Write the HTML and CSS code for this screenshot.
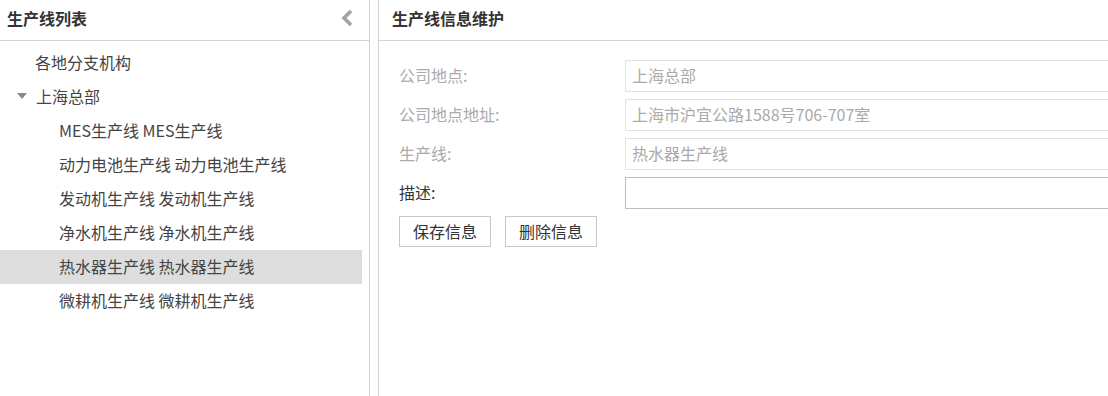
FILE: index.html
```html
<!DOCTYPE html>
<html lang="zh-CN">
<head>
    <meta charset="UTF-8">
    <title>生产线信息维护</title>
    <link rel="stylesheet" href="styles.css">
</head>
<body>

    <div class="layout">
        <div class="side-panel">
            <div class="panel-head">
                <span class="panel-title">生产线列表</span>
                <span class="collapse-btn">
                    <svg width="12" height="18" viewBox="0 0 12 18">
                        <polyline points="10,2 3,9 10,16" fill="none" stroke="#a3a3a3" stroke-width="3.6" stroke-linejoin="miter"/>
                    </svg>
                </span>
            </div>
            <ul class="tree">
                <li class="tree-node root">各地分支机构</li>
                <li class="tree-node branch"><span class="caret"></span>上海总部</li>
                <li class="tree-node leaf">MES生产线 MES生产线</li>
                <li class="tree-node leaf">动力电池生产线 动力电池生产线</li>
                <li class="tree-node leaf">发动机生产线 发动机生产线</li>
                <li class="tree-node leaf">净水机生产线 净水机生产线</li>
                <li class="tree-node leaf selected">热水器生产线 热水器生产线</li>
                <li class="tree-node leaf">微耕机生产线 微耕机生产线</li>
            </ul>
        </div>

        <div class="main-panel">
            <div class="panel-head">
                <span class="panel-title">生产线信息维护</span>
            </div>
            <form class="info-form">
                <div class="form-row">
                    <label class="muted">公司地点:</label>
                    <input type="text" value="上海总部" disabled>
                </div>
                <div class="form-row">
                    <label class="muted">公司地点地址:</label>
                    <input type="text" value="上海市沪宜公路1588号706-707室" disabled>
                </div>
                <div class="form-row">
                    <label class="muted">生产线:</label>
                    <input type="text" value="热水器生产线" disabled>
                </div>
                <div class="form-row">
                    <label>描述:</label>
                    <input type="text" value="">
                </div>
                <div class="actions">
                    <button type="button">保存信息</button>
                    <button type="button">删除信息</button>
                </div>
            </form>
        </div>
    </div>

</body>
</html>
```

FILE: styles.css
```css
* {
    margin: 0;
    padding: 0;
    box-sizing: border-box;
    font-family: "Noto Sans CJK SC", "Liberation Sans", sans-serif;
}

html, body {
    height: 100%;
    overflow: hidden;
}

body {
    background: #fff;
    color: #333;
    font-size: 16px;
}

.layout {
    display: flex;
    height: 100%;
    gap: 8px;
}

.side-panel {
    width: 370px;
    flex-shrink: 0;
    border-right: 1px solid #d2d2d2;
}

.main-panel {
    flex: 1;
    min-width: 0;
    border-left: 1px solid #d2d2d2;
}

.panel-head {
    display: flex;
    align-items: center;
    justify-content: space-between;
    height: 41px;
    padding: 0 7px 4px 7px;
    border-bottom: 1px solid #d4d4d4;
}

.main-panel .panel-head {
    padding-left: 13px;
}

.panel-title {
    font-size: 16px;
    font-weight: bold;
    color: #333;
}

.collapse-btn {
    display: flex;
    margin-right: 9px;
    cursor: pointer;
}

.tree {
    list-style: none;
    padding-top: 5px;
    width: 362px;
}

.tree-node {
    height: 34px;
    line-height: 32px;
    font-size: 16px;
    color: #444;
    white-space: nowrap;
}

.root {
    padding-left: 35px;
}

.branch {
    display: flex;
    align-items: center;
    padding-left: 17px;
    padding-bottom: 2px;
}

.caret {
    width: 0;
    height: 0;
    margin-right: 9px;
    border-left: 5px solid transparent;
    border-right: 5px solid transparent;
    border-top: 6px solid #888;
}

.leaf {
    padding-left: 59px;
}

.selected {
    background: #dddddd;
}

.info-form {
    padding: 19px 0 0 20px;
}

.form-row {
    display: flex;
    align-items: center;
    margin-bottom: 7px;
}

.form-row label {
    width: 226px;
    flex-shrink: 0;
    font-size: 16px;
    color: #333;
    padding-bottom: 2px;
}

.form-row label.muted {
    color: #aaa;
}

.form-row input {
    flex: 1;
    min-width: 0;
    height: 32px;
    padding: 0 6px 2px 6px;
    font-size: 16px;
    color: #aaa;
    background: #fff;
    border: 1px solid #bdbdbd;
    border-right: none;
    outline: none;
}

.form-row input:disabled {
    border-color: #e2e2e2;
}

.actions {
    display: flex;
    gap: 14px;
    margin-top: 1px;
}

.actions button {
    width: 92px;
    height: 31px;
    padding-bottom: 2px;
    font-size: 16px;
    color: #333;
    background: #fff;
    border: 1px solid #c8c8c8;
    cursor: pointer;
}

.actions button:hover {
    background: #f2f2f2;
}
```
